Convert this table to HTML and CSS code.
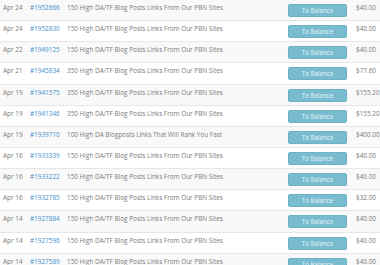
FILE: index.html
```html
<!DOCTYPE html>
<html>
<head>
<meta charset="utf-8">
<link rel="stylesheet" href="styles.css">
</head>
<body>
<div class="table">
  <div class="row"><span class="date">Apr 24</span><a class="order">#1952866</a><span class="desc">150 High DA/TF Blog Posts Links From Our PBN Sites</span><span class="btn">To Balance</span><span class="amt">$40.00</span></div>
  <div class="row"><span class="date">Apr 24</span><a class="order">#1952830</a><span class="desc">150 High DA/TF Blog Posts Links From Our PBN Sites</span><span class="btn">To Balance</span><span class="amt">$40.00</span></div>
  <div class="row"><span class="date">Apr 22</span><a class="order">#1949125</a><span class="desc">150 High DA/TF Blog Posts Links From Our PBN Sites</span><span class="btn">To Balance</span><span class="amt">$40.00</span></div>
  <div class="row"><span class="date">Apr 21</span><a class="order">#1945834</a><span class="desc">350 High DA/TF Blog Posts Links From Our PBN Sites</span><span class="btn">To Balance</span><span class="amt">$77.60</span></div>
  <div class="row"><span class="date">Apr 19</span><a class="order">#1941575</a><span class="desc">350 High DA/TF Blog Posts Links From Our PBN Sites</span><span class="btn">To Balance</span><span class="amt">$155.20</span></div>
  <div class="row"><span class="date">Apr 19</span><a class="order">#1941346</a><span class="desc">350 High DA/TF Blog Posts Links From Our PBN Sites</span><span class="btn">To Balance</span><span class="amt">$155.20</span></div>
  <div class="row"><span class="date">Apr 19</span><a class="order">#1939710</a><span class="desc">100 High DA Blogposts Links That Will Rank You Fast</span><span class="btn">To Balance</span><span class="amt">$400.00</span></div>
  <div class="row"><span class="date">Apr 16</span><a class="order">#1933339</a><span class="desc">150 High DA/TF Blog Posts Links From Our PBN Sites</span><span class="btn">To Balance</span><span class="amt">$40.00</span></div>
  <div class="row"><span class="date">Apr 16</span><a class="order">#1933222</a><span class="desc">150 High DA/TF Blog Posts Links From Our PBN Sites</span><span class="btn">To Balance</span><span class="amt">$40.00</span></div>
  <div class="row"><span class="date">Apr 16</span><a class="order">#1932785</a><span class="desc">150 High DA/TF Blog Posts Links From Our PBN Sites</span><span class="btn">To Balance</span><span class="amt">$32.00</span></div>
  <div class="row"><span class="date">Apr 14</span><a class="order">#1927884</a><span class="desc">150 High DA/TF Blog Posts Links From Our PBN Sites</span><span class="btn">To Balance</span><span class="amt">$40.00</span></div>
  <div class="row"><span class="date">Apr 14</span><a class="order">#1927596</a><span class="desc">150 High DA/TF Blog Posts Links From Our PBN Sites</span><span class="btn">To Balance</span><span class="amt">$40.00</span></div>
  <div class="row"><span class="date">Apr 14</span><a class="order">#1927589</a><span class="desc">150 High DA/TF Blog Posts Links From Our PBN Sites</span><span class="btn">To Balance</span><span class="amt">$40.00</span></div>
</div>
</body>
</html>
```

FILE: styles.css
```css
html, body {
  margin: 0;
  padding: 0;
  background: #ffffff;
  overflow: hidden;
}

.table {
  width: 400px;
  font-family: "Open Sans", "Liberation Sans", sans-serif;
  font-size: 6.4px;
  color: #7a7a7a;
}

.row {
  box-sizing: border-box;
  height: 21.15px;
  display: grid;
  grid-template-columns: 30px 37px 221px 68px 44px;
  align-items: start;
  border-bottom: 1px solid #e6e6e6;
  background: #ffffff;
}

.row:nth-child(odd) {
  background: #f9f9f9;
}

.date,
.order,
.desc,
.amt {
  padding-top: 4px;
  line-height: 8px;
  white-space: nowrap;
}

.date {
  padding-left: 3px;
}

.order {
  color: #3f8fcd;
}

.btn {
  box-sizing: border-box;
  margin-top: 4px;
  width: 59px;
  height: 13px;
  line-height: 12px;
  text-align: center;
  background: #79bccf;
  border: 1px solid #6cb1c6;
  border-radius: 2px;
  color: #e8f4f8;
  font-size: 6.2px;
}

.amt {
  color: #7a7a7a;
}
```
